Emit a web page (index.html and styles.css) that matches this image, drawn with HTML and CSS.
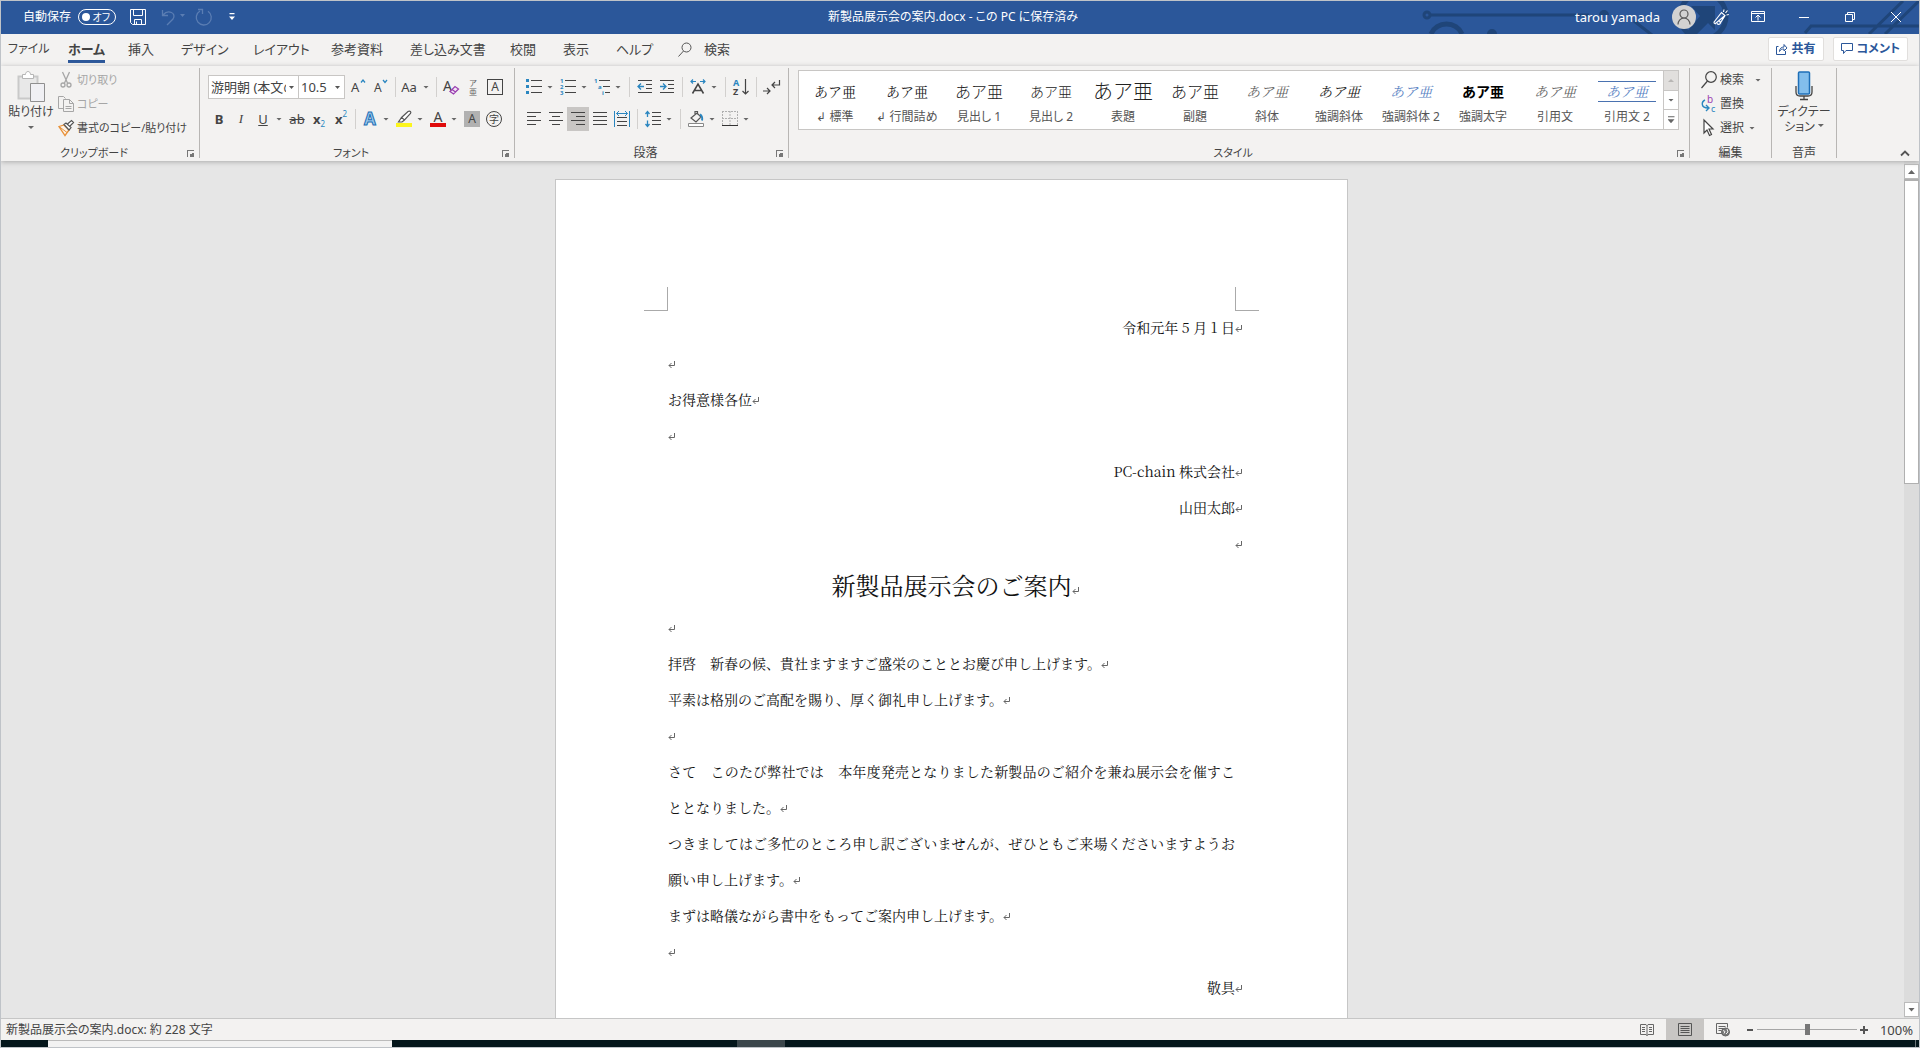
FILE: index.html
```html
<!DOCTYPE html>
<html lang="ja">
<head>
<meta charset="utf-8">
<title>新製品展示会の案内.docx</title>
<link rel="stylesheet" href="styles.css">
</head>
<body>
<header class="titlebar">
  <svg class="circuit" viewBox="0 0 520 33" aria-hidden="true"><g fill="none" stroke="#1f4579" stroke-width="3"><circle cx="28" cy="14" r="3"/><path d="M32 14H190M235 20l18 14M406 32l6-7h108M470 33l34-33M486 33l34-33"/><path d="M32 33a17 17 0 0 1 31 0" stroke-width="5"/><circle cx="304" cy="15" r="23" stroke-width="5"/></g><path fill="#1f4579" d="M292 5h24v24l-7-7-11 11h-12l15-18zM88 33a5 5 0 0 1 10 0zM200 14a5 5 0 0 1 10 0z"/></svg>
  <div class="quick">
    <label class="autosave"><span>自動保存</span><span class="switch"><input type="checkbox"><span>オフ</span></span></label>
    <button aria-label="保存"><svg width="16" height="16" viewBox="0 0 16 16" fill="none" stroke="#fff"><path d="M.5.5h15v15h-13l-2-2zM3.500.500v6h9v-6M4.500 15.500v-5h7v5M6.500 15v-2.500"/></svg></button>
    <button class="undo" aria-label="元に戻す"><svg width="28" height="18" viewBox="0 0 28 18" fill="none" stroke="#5a7db3" stroke-width="1.300"><path d="M2.500 2v5.500H8M3 7c5-6 14-2 10 4l-6 6"/><path d="M20 6h5l-2.500 3z" fill="#5a7db3" stroke="none"/></svg></button>
    <button class="redo" aria-label="繰り返し"><svg width="18" height="18" viewBox="0 0 18 18" fill="none" stroke="#5a7db3" stroke-width="1.300"><path d="M3 1.500h4.500V6M5 3a7.500 7.500 0 1 0 8 .3"/></svg></button>
    <button aria-label="クイック アクセス ツール バーのユーザー設定"><svg width="6" height="8" viewBox="0 0 6 8" fill="#fff"><path d="M.5 0h5v1.300h-5zM0 3.500h6l-3 3.500z"/></svg></button>
  </div>
  <h1 class="doctitle">新製品展示会の案内.docx - この PC に保存済み</h1>
  <div class="window">
    <span class="user">tarou yamada</span>
    <span class="avatar"><svg width="16" height="16" viewBox="0 0 16 16" fill="none" stroke="#5a5a5a" stroke-width="1.200"><circle cx="8" cy="5" r="4"/><path d="M2 15.500a6 6.500 0 0 1 12 0"/></svg></span>
    <button class="pen" aria-label="近日公開の機能"><svg width="16" height="16" viewBox="0 0 16 16" fill="none" stroke="#fff" stroke-width="1.200"><path d="M.7 13.500L8.500 3.500l3.500 3-5 8M.7 13.500l1.500 1.200L12 6.500M4 14.500q2 2 3.500-.5l-1-2M10.500 3l.5-2.500M12.500 4l2-2.500M13.500 6l2.300-.5"/></svg></button>
    <button aria-label="リボンの表示オプション"><svg width="14" height="12" viewBox="0 0 14 12" fill="none" stroke="#fff"><path d="M.5.5h13v10H.500zM.500 2.500h13M7 9.500v-5M4.500 6.500L7 4l2.500 2.500"/></svg></button>
    <button aria-label="最小化"><svg width="10" height="10" viewBox="0 0 10 10" stroke="#fff"><path d="M0 5.500h10"/></svg></button>
    <button aria-label="元に戻す (縮小)"><svg width="10" height="10" viewBox="0 0 10 10" fill="none" stroke="#fff"><path d="M.5 2.500h7v7h-7zM2.500 2V.5h7v7H8"/></svg></button>
    <button aria-label="閉じる"><svg width="10" height="10" viewBox="0 0 10 10" stroke="#fff"><path d="M0 0l10 10M10 0L0 10"/></svg></button>
  </div>
</header>

<nav class="tabs">
  <div class="tablist">
    <button>ファイル</button><button class="active">ホーム</button><button>挿入</button><button>デザイン</button><button>レイアウト</button><button>参考資料</button><button>差し込み文書</button><button>校閲</button><button>表示</button><button>ヘルプ</button>
    <label class="search"><svg width="14" height="15" viewBox="0 0 14 15" fill="none" stroke="#555"><circle cx="8.500" cy="5.500" r="4.500"/><path d="M5.500 9L.5 14.500"/></svg><input type="text" placeholder="検索" aria-label="検索"></label>
  </div>
  <div class="share">
    <button><svg width="12" height="12" viewBox="0 0 12 12" fill="none" stroke="#2b579a"><path d="M2.500 3.500H.500v8h9V8M3.500 8.500c0-3 2-4.500 4.500-4.500V1.500l3 3.500-3 3V6C6 6 4.500 6.500 3.500 8.500z"/></svg>共有</button>
    <button><svg width="12" height="12" viewBox="0 0 12 12" fill="none" stroke="#2b579a"><path d="M.5.5h11v7H5l-2.500 3v-3h-2z"/></svg>コメント</button>
  </div>
</nav>

<section class="ribbon">
  <div class="group clipboard">
    <div class="body">
      <button class="big"><svg width="28" height="32" viewBox="0 0 28 32" fill="#e8e8e8" stroke="#b5b5b5"><path d="M1.500 5.500h19v22h-19z" stroke-width="2" stroke="#c9c9c9"/><path d="M5.500 7.500v-4h3c0-4 5-4 5 0h3v4z" fill="#fff"/><path d="M13.500 12.500h14v18h-14z" fill="#f0f0f4" stroke="#8f8f8f"/></svg><span>貼り付け</span><i class="caret"></i></button>
      <div class="stack">
        <button disabled><svg width="16" height="16" viewBox="0 0 16 16" fill="none" stroke="#a6a6a6" stroke-width="1.300"><path d="M4.500 0l5 11M11.500 0l-5 11"/><circle cx="5" cy="13" r="2"/><circle cx="11" cy="13" r="2"/></svg>切り取り</button>
        <button disabled><svg width="16" height="16" viewBox="0 0 16 16" fill="none" stroke="#a6a6a6"><path d="M5 12.500H.500V.500h5l2 2M5.500 3.500h6l4 4v8h-10zM11.500 3.500v4h4M7.500 10.500h6M7.500 12.500h6"/></svg>コピー</button>
        <button><svg width="16" height="16" viewBox="0 0 16 16"><path d="M1 6.500l5-1.500 5 5-4 5.500z" fill="#fdf3e8" stroke="#e8923a" stroke-width="1.300"/><path d="M1 6.500l8 6" stroke="#e8923a"/><path d="M6 4.500l2-1.500 5 4.500-2 2.500zM9.500 4l4-3.500 2 2L12 6" fill="#fff" stroke="#555" stroke-width="1.200"/></svg>書式のコピー/貼り付け</button>
      </div>
    </div>
    <div class="foot"><span>クリップボード</span><button class="launch" aria-label="クリップボードの詳細"></button></div>
  </div>

  <div class="group font">
    <div class="body rows">
      <div class="row">
        <select class="face" aria-label="フォント"><option>游明朝 (本文のフォント)</option></select><select class="size" aria-label="フォント サイズ"><option>10.5</option></select>
        <button class="ib first" aria-label="フォントの拡大"><svg width="16" height="16" viewBox="0 0 16 16"><text x="0" y="13" font-size="13">A</text><path d="M10 3.500L12 1l2 2.500" fill="none" stroke="#2a86c0" stroke-width="1.300"/></svg></button>
        <button class="ib" aria-label="フォントの縮小"><svg width="16" height="16" viewBox="0 0 16 16"><text x="1" y="13" font-size="12">A</text><path d="M10 1l2 2.500L14 1" fill="none" stroke="#2a86c0" stroke-width="1.300"/></svg></button>
        <span class="sep"></span>
        <button class="ic"><span class="aa">Aa</span><i class="caret"></i></button>
        <span class="sep"></span>
        <button class="ib" aria-label="書式のクリア"><svg width="16" height="16" viewBox="0 0 16 16"><text x="0" y="12" font-size="14">A</text><path d="M7 12.500l5-5 3.500 2.500-5 5zM9 10.500l3.500 2.500" fill="#f3e6f7" stroke="#9a3fb0" stroke-width="1.300"/></svg></button>
        <button class="ib" aria-label="ルビ"><span class="ruby"><span>ア</span><span>亜</span></span></button>
        <button class="ib" aria-label="囲み線"><span class="boxed">A</span></button>
      </div>
      <div class="row">
        <button class="ib"><b>B</b></button><button class="ib"><i class="ital">I</i></button><button class="ic"><u>U</u><i class="caret"></i></button><button class="ib"><s>ab</s></button>
        <button class="ib"><span class="script"><b>x</b><sub>2</sub></span></button><button class="ib"><span class="script"><b>x</b><sup>2</sup></span></button>
        <span class="sep"></span>
        <button class="ic"><span class="effect">A</span><i class="caret"></i></button>
        <button class="ic" aria-label="蛍光ペンの色"><svg width="16" height="16" viewBox="0 0 16 16"><path d="M5.500 6.500l6.500-6c2-1 3.500.5 2.500 2L8.500 9zM5.500 6.500L2.500 11H6l2.500-2" fill="#fff" stroke="#555" stroke-width="1.200"/><path d="M0 12h16v4H0z" fill="#fcf51d"/></svg><i class="caret"></i></button>
        <button class="ic"><span class="colour">A</span><i class="caret"></i></button>
        <button class="ib"><span class="shade">A</span></button><button class="ib"><span class="ring">字</span></button>
      </div>
    </div>
    <div class="foot"><span>フォント</span><button class="launch" aria-label="フォントの詳細"></button></div>
  </div>

  <div class="group para">
    <div class="body rows">
      <div class="row">
        <button class="ic" aria-label="箇条書き"><svg width="16" height="16" viewBox="0 0 16 16"><path d="M0 0h3v3H0zM0 6h3v3H0zM0 12h3v3H0z" fill="#2a86c0"/><path d="M5 1.500h11M5 7.500h11M5 13.500h11" stroke="#444"/></svg><i class="caret"></i></button>
        <button class="ic" aria-label="段落番号"><svg width="16" height="16" viewBox="0 0 16 16"><g class="num"><text x="0" y="4">1</text><text x="0" y="10">2</text><text x="0" y="16">3</text></g><path d="M5 1.500h11M5 7.500h11M5 13.500h11" stroke="#444"/></svg><i class="caret"></i></button>
        <button class="ic" aria-label="アウトライン"><svg width="16" height="16" viewBox="0 0 16 16"><g class="num"><text x="0" y="4">1</text><text x="4" y="10">a</text><text x="8" y="16">i</text></g><path d="M5 1.500h11M9 7.500h7M11 13.500h5" stroke="#444"/></svg><i class="caret"></i></button>
        <span class="sep"></span>
        <button class="ib" aria-label="インデントを減らす"><svg width="16" height="14" viewBox="0 0 16 14" fill="none" stroke="#444"><path d="M1 .5h14M9 4.500h6M9 8.500h6M1 12.500h14"/><path d="M7 6.500H1M4 3.500l-3 3 3 3" stroke="#2a86c0" stroke-width="1.300"/></svg></button>
        <button class="ib" aria-label="インデントを増やす"><svg width="16" height="14" viewBox="0 0 16 14" fill="none" stroke="#444"><path d="M1 .5h14M9 4.500h6M9 8.500h6M1 12.500h14"/><path d="M1 6.500h6M4 3.500l3 3-3 3" stroke="#2a86c0" stroke-width="1.300"/></svg></button>
        <span class="sep"></span>
        <button class="ic" aria-label="拡張書式"><svg width="16" height="16" viewBox="0 0 16 16" fill="none"><path d="M2.500 14.500L8 5l5.500 9.500M4.500 11.500h7" stroke="#444" stroke-width="1.500"/><path d="M6 2.500H1M3 .5l-2 2 2 2M10 2.500h5M13 .5l2 2-2 2" stroke="#2a86c0" stroke-width="1.200"/></svg><i class="caret"></i></button>
        <span class="sep"></span>
        <button class="ib" aria-label="並べ替え"><svg width="16" height="16" viewBox="0 0 16 16" fill="none"><text x="0" y="7" class="sa">A</text><text x="0" y="16" class="sz">Z</text><path d="M12.500 0v15M9.500 12l3 3 3-3" stroke="#444" stroke-width="1.200"/></svg></button>
        <span class="sep"></span>
        <button class="ib" aria-label="編集記号の表示"><svg width="18" height="16" viewBox="0 0 18 16" fill="none" stroke="#444" stroke-width="1.200"><path d="M16.500 1v5H9M12 3L9 6l3 3M0 12h7M4 9l3 3-3 3"/></svg></button>
      </div>
      <div class="row">
        <button class="ib" aria-label="左揃え"><svg width="16" height="14" viewBox="0 0 16 14" stroke="#444"><path d="M1 .5h14M1 4.500h9M1 8.500h14M1 12.500h9"/></svg></button>
        <button class="ib" aria-label="中央揃え"><svg width="16" height="14" viewBox="0 0 16 14" stroke="#444"><path d="M1 .5h14M4 4.500h8M1 8.500h14M4 12.500h8"/></svg></button>
        <button class="ib on" aria-label="右揃え"><svg width="16" height="14" viewBox="0 0 16 14" stroke="#444"><path d="M1 .5h14M6 4.500h9M1 8.500h14M6 12.500h9"/></svg></button>
        <button class="ib" aria-label="両端揃え"><svg width="16" height="14" viewBox="0 0 16 14" stroke="#444"><path d="M1 .5h14M1 4.500h14M1 8.500h14M1 12.500h14"/></svg></button>
        <button class="ib" aria-label="均等割り付け"><svg width="16" height="16" viewBox="0 0 16 16" fill="none" stroke="#444"><path d="M3 6.500h10M3 10.500h10M3 14.500h10"/><path d="M.5 0v16M15.500 0v16M2.500 2.500h11M5 0L2.500 2.500 5 5M11 0l2.500 2.500L11 5" stroke="#2a86c0"/></svg></button>
        <span class="sep"></span>
        <button class="ic" aria-label="行間"><svg width="16" height="16" viewBox="0 0 16 16" fill="none" stroke="#444"><path d="M7 1.500h9M7 5.500h9M7 9.500h9M7 13.500h9"/><path d="M2.500 1v5M.5 3l2-2.500 2 2.500M2.500 9.500v5M.5 13l2 2.500 2-2.500" stroke="#2a86c0" stroke-width="1.300"/></svg><i class="caret"></i></button>
        <span class="sep"></span>
        <button class="ic" aria-label="塗りつぶし"><svg width="16" height="16" viewBox="0 0 16 16" fill="none" stroke="#555"><path d="M3 7l6-5 4 4-5 5zM7 3V.5h2.500v3" stroke-width="1.200"/><path d="M12 3.500c2 1 2.500 4 2 6" stroke="#2a86c0" stroke-width="2"/><path d="M.5 12.500h15v3H.500z" fill="#fff" stroke="#888"/></svg><i class="caret"></i></button>
        <button class="ic" aria-label="罫線"><svg width="16" height="16" viewBox="0 0 16 16" fill="none" stroke="#b0b0b0"><path d="M.5 0v14M8 0v14M15.500 0v14M0 .5h16M0 7.500h16" stroke-dasharray="2 1"/><path d="M0 14.500h16" stroke="#333"/></svg><i class="caret"></i></button>
      </div>
    </div>
    <div class="foot"><span>段落</span><button class="launch" aria-label="段落の詳細"></button></div>
  </div>

  <div class="group styles">
    <div class="body">
      <div class="gallery">
        <button><span class="smp min">あア亜</span><span>↲ 標準</span></button>
        <button><span class="smp min">あア亜</span><span>↲ 行間詰め</span></button>
        <button><span class="smp h">あア亜</span><span>見出し 1</span></button>
        <button><span class="smp">あア亜</span><span>見出し 2</span></button>
        <button><span class="smp t">あア亜</span><span>表題</span></button>
        <button><span class="smp h">あア亜</span><span>副題</span></button>
        <button><span class="smp min em soft">あア亜</span><span>斜体</span></button>
        <button><span class="smp min em">あア亜</span><span>強調斜体</span></button>
        <button><span class="smp min em blue">あア亜</span><span>強調斜体 2</span></button>
        <button><span class="smp strong">あア亜</span><span>強調太字</span></button>
        <button><span class="smp min em soft">あア亜</span><span>引用文</span></button>
        <button><span class="smp min em blue lined">あア亜</span><span>引用文 2</span></button>
        <div class="more"><button disabled aria-label="前の行"><i class="caret up"></i></button><button aria-label="次の行"><i class="caret"></i></button><button aria-label="その他"><i class="caret bar"></i></button></div>
      </div>
    </div>
    <div class="foot"><span>スタイル</span><button class="launch" aria-label="スタイルの詳細"></button></div>
  </div>

  <div class="group edit">
    <div class="body"><div class="stack">
      <button><svg width="16" height="18" viewBox="0 0 16 18" fill="none" stroke="#444" stroke-width="1.200"><circle cx="10" cy="6" r="5.300"/><path d="M6.500 10L.5 17"/></svg>検索<i class="caret far"></i></button>
      <button><svg width="16" height="18" viewBox="0 0 16 18" fill="none"><text x="6" y="8" class="rb">b</text><text x="10" y="17" class="rc">c</text><path d="M4 5c-4 2-4 8 3 8M5 10l3 3-3 3" stroke="#2a86c0" stroke-width="1.400"/></svg>置換</button>
      <button><svg width="16" height="18" viewBox="0 0 16 18" fill="#fff" stroke="#444" stroke-width="1.200"><path d="M3 1v13l3-3 2.500 5.500 2-1L8 10h4z"/></svg>選択<i class="caret"></i></button>
    </div></div>
    <div class="foot"><span>編集</span></div>
  </div>

  <div class="group voice">
    <div class="body"><button class="big"><svg width="20" height="32" viewBox="0 0 20 32" fill="none"><rect x="4.500" y="1" width="11" height="22" rx="1" fill="#83beec" stroke="#1e6fb8" stroke-width="1.500"/><path d="M2 15v6q0 4 4 4h8q4 0 4-4v-6M10 25v3M6 28.500h8" stroke="#444" stroke-width="1.300"/></svg><span>ディクテー<br>ション <i class="caret"></i></span></button></div>
    <div class="foot"><span>音声</span></div>
  </div>
  <button class="collapse" aria-label="リボンを折りたたむ"><svg width="10" height="6" viewBox="0 0 10 6" fill="none" stroke="#555" stroke-width="1.800"><path d="M1 5.500l4-4 4 4"/></svg></button>
</section>

<main class="workspace">
  <div class="canvas">
    <article class="page">
      <div class="marks"><span></span><span></span></div>
      <p class="right">令和元年 5 月 1 日<i class="ret"></i></p>
      <p><i class="ret"></i></p>
      <p>お得意様各位<i class="ret"></i></p>
      <p><i class="ret"></i></p>
      <p class="right">PC-chain 株式会社<i class="ret"></i></p>
      <p class="right">山田太郎<i class="ret"></i></p>
      <p class="right"><i class="ret"></i></p>
      <h2>新製品展示会のご案内<i class="ret"></i></h2>
      <p><i class="ret"></i></p>
      <p>拝啓　新春の候、貴社ますますご盛栄のこととお慶び申し上げます。<i class="ret"></i></p>
      <p>平素は格別のご高配を賜り、厚く御礼申し上げます。<i class="ret"></i></p>
      <p><i class="ret"></i></p>
      <p>さて　このたび弊社では　本年度発売となりました新製品のご紹介を兼ね展示会を催すこととなりました。<i class="ret"></i></p>
      <p>つきましてはご多忙のところ申し訳ございませんが、ぜひともご来場くださいますようお願い申し上げます。<i class="ret"></i></p>
      <p>まずは略儀ながら書中をもってご案内申し上げます。<i class="ret"></i></p>
      <p><i class="ret"></i></p>
      <p class="right">敬具<i class="ret"></i></p>
    </article>
  </div>
  <div class="scroll"><button aria-label="上へスクロール"><i class="caret up"></i></button><div class="track"><div class="thumb"></div></div><button aria-label="下へスクロール"><i class="caret"></i></button></div>
</main>

<footer class="status">
  <span class="count">新製品展示会の案内.docx: 約 228 文字</span>
  <div class="views">
    <button aria-label="閲覧モード"><svg width="14" height="14" viewBox="0 0 14 14" fill="none" stroke="#666"><path d="M.5 1.500H6L7 2.500l1-1h5.500v10H8l-1 1-1-1H.500zM7 2v11M2 4.500h3M2 6.500h3M2 8.500h3M9 4.500h3M9 6.500h3M9 8.500h3"/></svg></button>
    <button class="on" aria-label="印刷レイアウト"><svg width="14" height="14" viewBox="0 0 14 14" fill="none" stroke="#555"><path d="M.5.5h13v12H.500zM2.500 3.500h9M2.500 5.500h9M2.500 7.500h9M2.500 9.500h9"/></svg></button>
    <button aria-label="Web レイアウト"><svg width="14" height="14" viewBox="0 0 14 14" fill="none" stroke="#666"><path d="M6 10.500H.500V.500h11v4M2.500 3.500h7M2.500 5.500h5M2.500 7.500h3"/><circle cx="9.500" cy="9" r="4" fill="#777"/><path d="M7 7.500l2 1-1 2M11 6l1 3-2 2" stroke="#eee"/></svg></button>
  </div>
  <div class="zoom"><button aria-label="縮小"><svg width="8" height="8" viewBox="0 0 8 8" stroke="#555" stroke-width="2"><path d="M1 4h6"/></svg></button><input type="range" min="10" max="190" value="100" aria-label="ズーム"><button aria-label="拡大"><svg width="8" height="8" viewBox="0 0 8 8" stroke="#555" stroke-width="2"><path d="M0 4h8M4 0v8"/></svg></button><output>100%</output></div>
</footer>
<div class="taskbar"><span class="start"></span><span class="find"></span><span class="gap"></span><span class="app"></span><span class="rest"></span></div>
</body>
</html>
```
FILE: styles.css
```css
* { box-sizing: border-box; }
body {
  margin: 0;
  height: 100vh;
  display: flex;
  flex-direction: column;
  border: 1px solid #bfc3c8;
  overflow: hidden;
  background: #f3f2f1;
  color: #444;
  font: 12px/16px "Noto Sans", "Noto Sans CJK JP", sans-serif;
  font-feature-settings: "palt";
}
button, input, select { font: inherit; font-feature-settings: inherit; color: inherit; border: 0; padding: 0; margin: 0; background: none; }
button { display: flex; align-items: center; justify-content: center; white-space: nowrap; }
svg { display: block; flex: none; overflow: visible; }
svg text { fill: #444; font-family: "Noto Sans", sans-serif; }

/* title bar */
.titlebar { position: relative; flex: none; height: 33px; display: grid; grid-template-columns: 1fr auto 1fr; align-items: center; padding-bottom: 2px; background: #2b579a; color: #fff; overflow: hidden; }
.circuit { position: absolute; right: 0; top: 0; width: 520px; height: 33px; }
.titlebar > div, .doctitle { position: relative; }
.quick { display: flex; align-items: center; padding-left: 22px; }
.quick button { height: 24px; margin-right: 14px; }
.quick .undo { margin-right: 7px; }
.quick .redo { margin-right: 16px; }
.autosave { display: flex; align-items: center; gap: 7px; margin-right: 14px; }
.switch { display: flex; align-items: center; width: 38px; height: 16px; padding: 0 5px 0 3px; border: 1px solid #fff; border-radius: 8px; font-size: 10px; justify-content: space-between; }
.switch input { appearance: none; width: 8px; height: 8px; border-radius: 50%; background: #fff; }
.doctitle { margin: 0 14px 0 0; font-size: 12px; line-height: 16px; font-weight: 400; }
.window { display: flex; align-items: center; justify-content: flex-end; }
.window button { width: 46px; height: 31px; }
.window .pen { width: 28px; }
.user { font-size: 13px; margin-right: 12px; }
.avatar { width: 24px; height: 24px; margin-right: 11px; border-radius: 50%; background: #d2d2d2; display: flex; align-items: center; justify-content: center; }

/* tabs */
.tabs { flex: none; height: 32px; display: flex; justify-content: space-between; align-items: center; padding-bottom: 2px; }
.tablist { display: grid; grid-template-columns: 60px 60px 53px 72px 78px 79px 100px 53px 53px 62px auto; padding-left: 7px; font-size: 13px; }
.tablist > button { justify-self: start; height: 28px; border: solid transparent; border-width: 3px 0; }
.tablist > button:first-child { font-size: 12px; }
.tablist > .active { border-bottom-color: #2b579a; font-weight: 700; }
.search { display: flex; align-items: center; gap: 12px; }
.search input { width: 100px; }
.search input::placeholder { color: #444; opacity: 1; }
.share { display: flex; gap: 9px; padding-right: 11px; }
.share button { height: 24px; padding: 0 7px; gap: 4px; background: #fff; border: 1px solid #e1dfdd; border-radius: 2px; color: #2b579a; font-weight: 700; }

/* ribbon */
.ribbon { flex: none; height: 95px; display: flex; position: relative; z-index: 1; background: #f3f2f1; box-shadow: 0 1px 5px #aaa; }
.group { display: flex; flex-direction: column; margin: 2px 0 3px; border-right: 1px solid #b8b6b4; }
.body { flex: 1; display: flex; min-height: 0; }
.foot { height: 10px; display: flex; align-items: center; justify-content: center; line-height: 10px; }
.foot span { flex: 1; text-align: center; }
.clipboard .foot, .font .foot, .styles .foot { font-size: 11px; }
.launch { width: 7px; height: 7px; margin: 1px 5px 0 0; border: solid #777; border-width: 1px 0 0 1px; background: linear-gradient(135deg, transparent 50%, #777 50%); background-clip: content-box; padding: 2px 0 0 2px; }
.caret { flex: none; display: inline-block; width: 6px; height: 3px; background: #666; clip-path: polygon(0 0, 100% 0, 50% 100%); }
.caret.up { transform: rotate(180deg); }
.caret.bar { height: 7px; width: 7px; clip-path: polygon(0 0, 100% 0, 100% 15%, 0 15%, 0 45%, 100% 45%, 50% 100%, 0 45%); }
.big { flex-direction: column; justify-content: flex-start; padding-top: 3px; gap: 1px; line-height: 15px; }
.clipboard { width: 199px; }
.clipboard .big { width: 50px; margin-left: 5px; }
.clipboard .big span { line-height: 16px; }
.clipboard .big .caret { margin-top: 5px; }
.stack { display: flex; flex-direction: column; }
.stack button { height: 24px; justify-content: flex-start; gap: 3px; flex: none; }
.clipboard .stack { padding: 0 0 0 2px; font-size: 11px; }
.stack button:disabled { color: #a6a6a6; }
.font { width: 315px; }
.para { width: 274px; }
.rows { flex-direction: column; padding: 7px 8px 0; gap: 8px; }
.row { display: flex; align-items: center; height: 24px; flex: none; }
.ib { width: 22px; height: 24px; flex: none; }
.ic { width: 34px; height: 24px; flex: none; justify-content: flex-start; }
.ic > :first-child { width: 16px; margin: 0 5px 0 3px; text-align: center; flex: none; }
.ib.first { margin-left: 3px; }
.on { background: #c8c6c4; }
.sep { width: 1px; height: 20px; margin: 0 3px; background: #d2d0ce; flex: none; }
.para .sep { margin: 0 4px; }
select { appearance: none; height: 24px; border: 1px solid #c8c6c4; background: #fff url("data:image/svg+xml,%3Csvg xmlns='http://www.w3.org/2000/svg' width='5' height='3'%3E%3Cpath d='M0 0h5L2.500 3z' fill='%23555'/%3E%3C/svg%3E") no-repeat right 4px center; padding: 0 12px 0 2px; font-size: 13px; }
.face { width: 91px; text-overflow: clip; }
.size { width: 47px; margin-left: -1px; }
.aa { font-size: 13px; }
.ic > .aa { width: 18px; margin: 0 5px 0 1px; }
.ruby { display: flex; flex-direction: column; font-size: 8px; line-height: 9px; color: #666; }
.boxed { width: 16px; height: 16px; border: 1px solid #444; font-size: 12px; line-height: 14px; }
.row b, .ital, .row u, .row s { font-size: 13px; }
.ital { font-family: "Liberation Serif", serif; }
.script { display: flex; align-items: center; }
.script sub, .script sup { color: #2a86c0; font-size: 8px; line-height: 8px; }
.script sub { padding-top: 10px; }
.script sup { padding-bottom: 10px; }
.effect { color: #9cc9ec; -webkit-text-stroke: 1px #1c6fb5; font-size: 17px; font-weight: 700; }
.colour { height: 16px; border-bottom: 4px solid #e00b0b; font-size: 14px; line-height: 12px; }
.shade { width: 16px; height: 16px; background: #b1b1b1; }
.ring { width: 16px; height: 16px; border: 1px solid #444; border-radius: 50%; font-size: 10px; line-height: 14px; }
svg .sa, svg .sz { font-size: 9px; font-weight: 700; }
svg .sa, .num text, svg .rc { fill: #2a86c0; }
.num text { font-size: 6px; font-weight: 700; }
svg .rb { fill: #9a3fb0; font-size: 10px; }
svg .rc { font-size: 9px; }

/* styles gallery */
.styles { flex: 1; min-width: 0; }
.gallery { flex: 1; display: flex; margin: 2px 10px 0 9px; height: 60px; border: 1px solid #c8c6c4; background: #fff; }
.gallery > button { flex: 1 1 0; flex-direction: column; padding-top: 5px; color: #555; }
.smp { height: 28px; display: flex; align-items: center; padding-bottom: 7px; font-size: 14px; font-weight: 300; color: #222; font-feature-settings: normal; font-family: "Noto Sans CJK JP", sans-serif; }
.smp.min { font-family: "Noto Serif CJK JP", "Noto Sans CJK JP", serif; font-weight: 400; }
.smp.h { font-size: 16px; }
.smp.t { font-size: 20px; }
.smp.em { font-style: italic; }
.smp.soft { color: #666; }
.smp.blue { color: #5b84c4; }
.smp.strong { font-weight: 700; color: #000; }
.smp.lined { height: 21px; margin: 0 0 7px; padding: 0 8px; border: solid #4a72b0; border-width: 1px 0; }
.more { width: 15px; display: flex; flex-direction: column; }
.more button { flex: 1; border-left: 1px solid #c8c6c4; border-bottom: 1px solid #c8c6c4; }
.more button:last-child { border-bottom: 0; }
.more button:disabled { background: #e1dfdd; }
.more button:disabled .caret { background: #b8b6b4; }
.edit { width: 82px; }
.edit .stack { padding-left: 11px; }
.edit .caret { margin-left: 2px; }
.edit .caret.far { margin-left: 8px; }
.voice { width: 65px; }
.voice .big { flex: 1; }
.voice .caret { margin-bottom: 4px; }
.collapse { width: 82px; height: 16px; align-self: flex-end; padding-left: 54px; }

/* document */
.workspace { flex: 1; min-height: 0; display: flex; background: #e6e6e6; }
.canvas { flex: 1; overflow: hidden; display: flex; justify-content: center; align-items: flex-start; padding: 18px 2px 0 0; }
.page { width: 793px; min-height: 1122px; flex: none; padding: 107px 112px; background: #fff; border: 1px solid #c6c6c6; color: #111; font: 14px/36px "Noto Serif CJK JP", "Liberation Serif", "Noto Sans CJK JP", serif; font-feature-settings: normal; }
.page p { margin: 0; min-height: 36px; text-align: justify; }
.page .right { text-align: right; }
.page h2 { margin: 0; font-size: 24px; line-height: 48px; font-weight: 400; text-align: center; }
.marks { display: flex; justify-content: space-between; height: 24px; margin: 0 -24px -2px; }
.marks span { width: 24px; border: solid #aaa; border-width: 0 1px 1px 0; }
.marks span:last-child { border-width: 0 0 1px 1px; }
.ret { display: inline-block; width: 8px; height: 8px; margin-right: -8px; background: url("data:image/svg+xml,%3Csvg xmlns='http://www.w3.org/2000/svg' width='8' height='8' fill='none' stroke='%23666'%3E%3Cpath d='M6.500 0v4.500H1M3.500 2L1 4.500 3.500 7'/%3E%3C/svg%3E") no-repeat; }
.scroll { width: 15px; display: flex; flex-direction: column; padding: 3px 0 1px; background: #dcdcdc; }
.scroll button { height: 15px; flex: none; background: #fff; border: 1px solid #bbb; }
.scroll .caret { width: 7px; height: 4px; }
.track { flex: 1; }
.thumb { height: 37%; background: #fff; border: 1px solid #b0b0b0; border-top-width: 2px; }

/* status bar */
.status { flex: none; height: 22px; display: flex; align-items: center; border-top: 1px solid #c6c6c6; padding: 0 6px 0 5px; }
.count { flex: 1; }
.views { display: flex; align-self: stretch; margin-right: 4px; }
.views button { width: 38px; }
.zoom { display: flex; align-items: center; gap: 3px; }
.zoom input { appearance: none; width: 100px; height: 12px; background: linear-gradient(#a6a6a6, #a6a6a6) center / 100% 1px no-repeat; }
.zoom input::-webkit-slider-thumb { appearance: none; width: 5px; height: 11px; background: #777; }
.zoom output { width: 42px; text-align: right; font-size: 13px; }
.taskbar { flex: none; height: 7px; display: flex; background: #04161b; }
.start { width: 47px; }
.find { width: 344px; background: #f2f2f2; border-top: 1px solid #bbb; }
.gap { width: 345px; }
.app { width: 48px; background: #3b464b; }
.rest { flex: 1; margin-right: 3px; border-right: 1px solid #6a7478; }
```
